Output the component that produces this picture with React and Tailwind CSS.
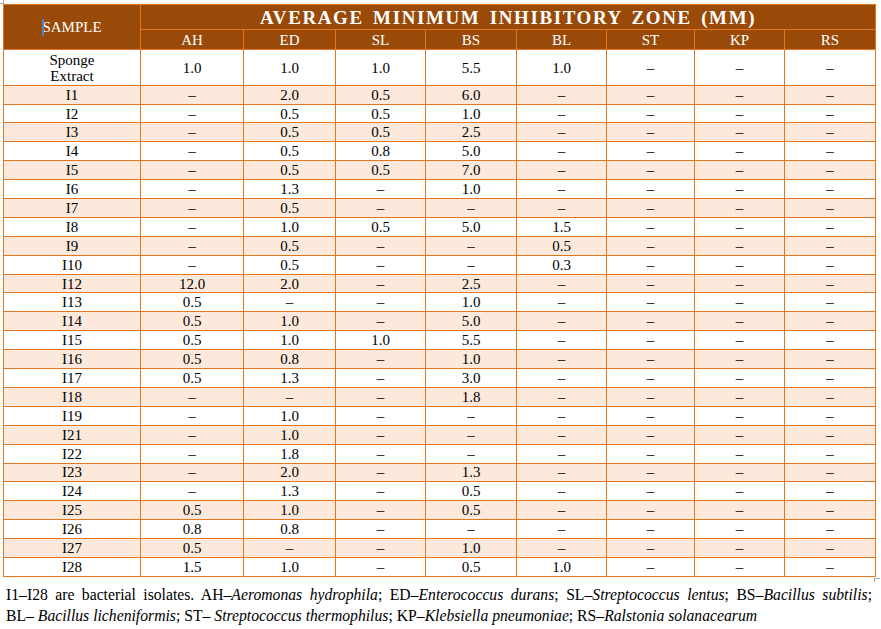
import React from 'react';

const cols = ['AH', 'ED', 'SL', 'BS', 'BL', 'ST', 'KP', 'RS'];
const widths = [137, 103, 92, 90, 91, 90, 88, 90, 91];

const D = '–';

// sample, AH, ED, SL, BS, BL (ST, KP, RS are all dashes)
const rows = [
  ['I1', D, '2.0', '0.5', '6.0', D],
  ['I2', D, '0.5', '0.5', '1.0', D],
  ['I3', D, '0.5', '0.5', '2.5', D],
  ['I4', D, '0.5', '0.8', '5.0', D],
  ['I5', D, '0.5', '0.5', '7.0', D],
  ['I6', D, '1.3', D, '1.0', D],
  ['I7', D, '0.5', D, D, D],
  ['I8', D, '1.0', '0.5', '5.0', '1.5'],
  ['I9', D, '0.5', D, D, '0.5'],
  ['I10', D, '0.5', D, D, '0.3'],
  ['I12', '12.0', '2.0', D, '2.5', D],
  ['I13', '0.5', D, D, '1.0', D],
  ['I14', '0.5', '1.0', D, '5.0', D],
  ['I15', '0.5', '1.0', '1.0', '5.5', D],
  ['I16', '0.5', '0.8', D, '1.0', D],
  ['I17', '0.5', '1.3', D, '3.0', D],
  ['I18', D, D, D, '1.8', D],
  ['I19', D, '1.0', D, D, D],
  ['I21', D, '1.0', D, D, D],
  ['I22', D, '1.8', D, D, D],
  ['I23', D, '2.0', D, '1.3', D],
  ['I24', D, '1.3', D, '0.5', D],
  ['I25', '0.5', '1.0', D, '0.5', D],
  ['I26', '0.8', '0.8', D, D, D],
  ['I27', '0.5', D, D, '1.0', D],
  ['I28', '1.5', '1.0', D, '0.5', '1.0'],
];

export default function App() {
  return (
    <div className="relative min-h-[629px] w-[881px] bg-white pl-[3px] pt-[4px] [font-family:'Liberation_Serif','Times_New_Roman',serif] text-black">
      {/* word-processor corner marks */}
      <div className="absolute left-0 top-[3px] h-px w-[3px] bg-[#a6a6a6]" />
      <div className="absolute left-[3px] top-0 h-[4px] w-px bg-[#a6a6a6]" />
      <div className="absolute left-[874px] top-[578px] h-px w-[6px] bg-[#a6a6a6]" />
      <div className="absolute left-[874px] top-[578px] h-[4px] w-px bg-[#a6a6a6]" />

      <table className="w-[872px] table-fixed border-collapse text-center text-[15px] leading-[16px]">
        <colgroup>
          {widths.map((w, i) => (
            <col key={i} style={{ width: w }} />
          ))}
        </colgroup>
        <thead>
          <tr className="bg-[#994a08] text-white">
            <th rowSpan={2} className="relative border border-[#e3761f] p-0 align-middle font-normal">
              <span className="absolute left-[38px] top-[14px] h-[17px] w-[2px] bg-[#4b86d6]" />
              SAMPLE
            </th>
            <th
              colSpan={8}
              className="h-[25px] border border-[#e3761f] p-0 pt-[2px] text-[19px] font-bold leading-[22px] tracking-[1.6px] [word-spacing:3px]"
            >
              AVERAGE MINIMUM INHIBITORY ZONE (MM)
            </th>
          </tr>
          <tr className="bg-[#994a08] text-white">
            {cols.map((c) => (
              <th key={c} className="h-[20.4px] border border-[#e3761f] p-0 font-normal">
                {c}
              </th>
            ))}
          </tr>
        </thead>
        <tbody>
          <tr className="bg-white">
            <td className="h-[35.3px] border border-[#e3761f] p-0">
              Sponge
              <br />
              Extract
            </td>
            {['1.0', '1.0', '1.0', '5.5', '1.0', D, D, D].map((v, i) => (
              <td key={i} className="border border-[#e3761f] p-0">
                {v}
              </td>
            ))}
          </tr>
          {rows.map((r, idx) => (
            <tr key={r[0]} className={idx % 2 === 0 ? 'bg-[#fce9dc]' : 'bg-white'}>
              {[...r, D, D, D].map((v, i) => (
                <td key={i} className="h-[18.9px] border border-[#e3761f] p-0">
                  {v}
                </td>
              ))}
            </tr>
          ))}
        </tbody>
      </table>

      <div className="mt-[7px] w-[869px] pl-[3px] text-[15.7px] leading-[21px]">
        <p className="text-justify [text-align-last:justify]">
          I1–I28 are bacterial isolates. AH–<i>Aeromonas hydrophila</i>; ED–<i>Enterococcus durans</i>; SL–
          <i>Streptococcus lentus</i>; BS–<i>Bacillus subtilis</i>;
        </p>
        <p>
          BL– <i>Bacillus licheniformis</i>; ST– <i>Streptococcus thermophilus</i>; KP–<i>Klebsiella pneumoniae</i>;
          RS–<i>Ralstonia solanacearum</i>
        </p>
      </div>
    </div>
  );
}
